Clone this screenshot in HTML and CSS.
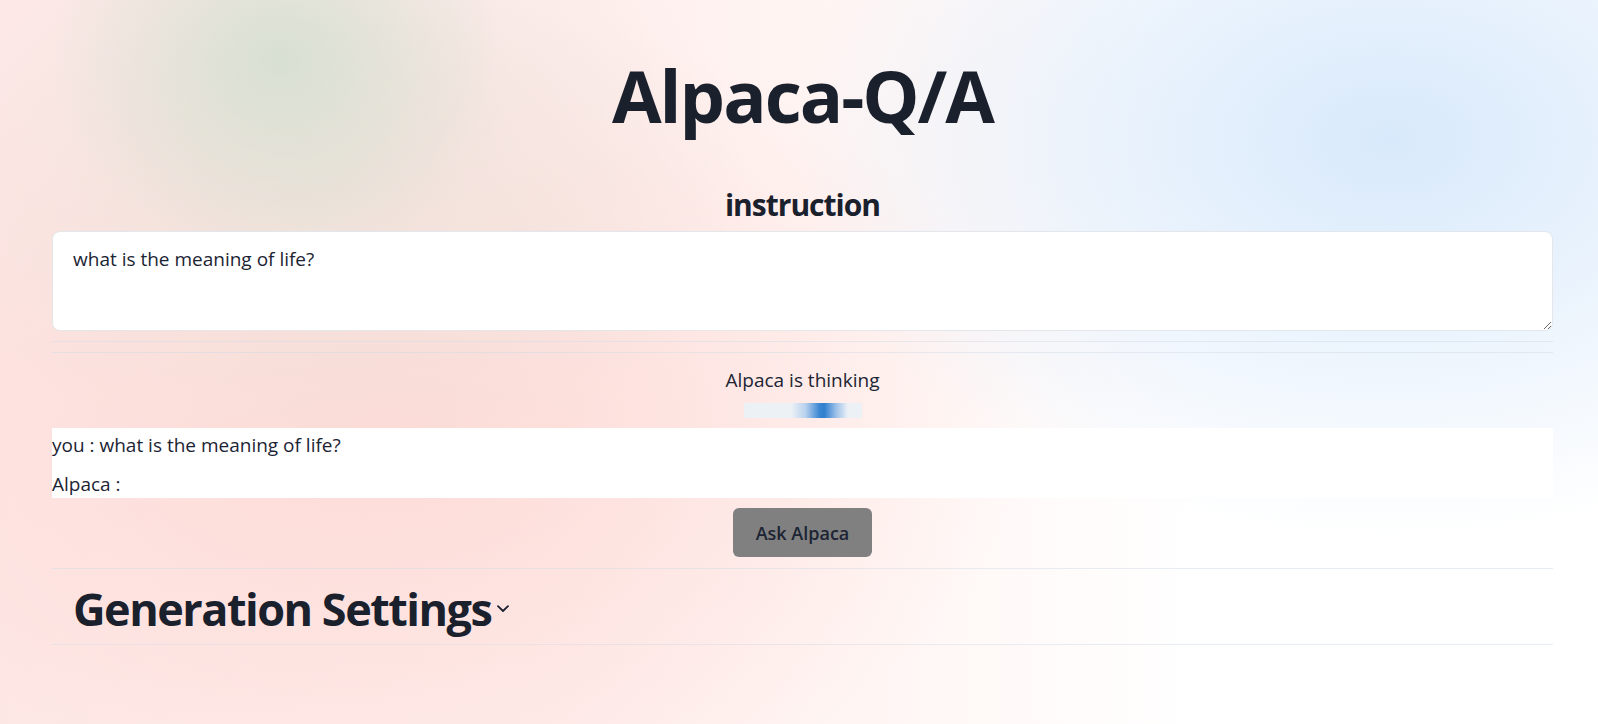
FILE: index.html
```html
<!DOCTYPE html>
<html lang="en">
<head>
<meta charset="utf-8">
<title>Alpaca-Q/A</title>
<link rel="stylesheet" href="styles.css">
</head>
<body>
<main class="page">
  <h1 class="title">Alpaca-Q/A</h1>
  <label class="label" for="prompt">instruction</label>
  <textarea id="prompt" class="prompt">what is the meaning of life?</textarea>
  <hr class="rule rule-first">
  <hr class="rule rule-second">
  <section class="status">
    <p class="status-text">Alpaca is thinking</p>
    <div class="bar"></div>
  </section>
  <section class="chat">
    <p class="msg">you : what is the meaning of life?</p>
    <p class="msg">Alpaca :</p>
  </section>
  <div class="actions">
    <button class="ask" type="button">Ask Alpaca</button>
  </div>
  <hr class="rule rule-top">
  <details class="settings">
    <summary class="settings-summary">
      <h2 class="settings-title">Generation Settings</h2>
      <svg class="chevron" width="12" height="8" viewBox="0 0 12 8" aria-hidden="true"><path d="M1 1.2 L6 6 L11 1.2" fill="none" stroke="#1b2130" stroke-width="1.8" stroke-linecap="round" stroke-linejoin="round"/></svg>
    </summary>
  </details>
  <hr class="rule rule-bottom">
</main>
</body>
</html>
```
FILE: styles.css
```css
html, body {
  margin: 0;
  padding: 0;
  height: 100%;
}

body {
  font-family: "Open Sans", "Noto Sans", sans-serif;
  color: #1c2433;
  background-color: #ffffff;
  background-image:
    radial-gradient(ellipse 230px 200px at 280px 60px, rgba(214, 224, 210, 0.95), rgba(214, 224, 210, 0) 100%),
    radial-gradient(ellipse 420px 300px at 330px 180px, rgba(236, 226, 218, 0.8), rgba(236, 226, 218, 0) 100%),
    radial-gradient(ellipse 600px 400px at 1390px 140px, rgba(216, 233, 251, 1), rgba(216, 233, 251, 0) 100%),
    radial-gradient(ellipse 650px 420px at 380px 420px, rgba(253, 218, 214, 1), rgba(253, 218, 214, 0) 100%),
    linear-gradient(90deg, #fde8e6 0%, #feeeec 35%, #fff6f4 55%, #ffffff 75%);
  overflow: hidden;
}

.page {
  display: flex;
  flex-direction: column;
  margin: 0 45px 0 52px;
}

.title {
  margin: 59px 0 0;
  font-size: 72px;
  line-height: 72px;
  font-weight: 700;
  text-align: center;
  color: #1a202c;
  letter-spacing: -2px;
}

.label {
  display: block;
  margin-top: 56px;
  font-size: 30px;
  line-height: 36px;
  font-weight: 700;
  text-align: center;
  color: #1a202c;
  letter-spacing: -1px;
}

.prompt {
  display: block;
  margin-top: 8px;
  box-sizing: border-box;
  width: 100%;
  height: 100px;
  padding: 13px 20px;
  border: 1px solid #e3e6eb;
  border-radius: 8px;
  background: #ffffff;
  font-family: inherit;
  font-size: 19px;
  line-height: 28px;
  color: #1c2433;
  outline: none;
}

.rule {
  width: 100%;
  height: 0;
  margin: 0;
  border: 0;
  border-top: 1px solid rgba(210, 220, 232, 0.5);
}

.rule-first { margin-top: 10px; }
.rule-second { margin-top: 10px; }

.status {
  display: flex;
  flex-direction: column;
  align-items: center;
  margin-top: 13px;
}

.status-text {
  margin: 0;
  font-size: 19px;
  line-height: 28px;
}

.bar {
  width: 118px;
  height: 15px;
  margin-top: 9px;
  background: linear-gradient(90deg, #ecf1f6 0%, #ecf1f6 40%, #b9d2ee 52%, #3a86d2 64%, #2f7fcf 68%, #9cc0e8 78%, #ecf1f6 88%, #ecf1f6 100%);
}

.chat {
  margin-top: 10px;
  padding-top: 3px;
  background: #ffffff;
  display: flex;
  flex-direction: column;
  gap: 11px;
}

.msg {
  margin: 0;
  font-size: 19px;
  line-height: 28px;
}

.actions {
  display: flex;
  justify-content: center;
  margin-top: 10px;
}

.ask {
  width: 139px;
  height: 49px;
  border: 0;
  border-radius: 6px;
  background: #808080;
  font-family: inherit;
  font-size: 18px;
  font-weight: 600;
  color: #1c2433;
  cursor: pointer;
}

.rule-top { margin-top: 11px; }

.settings {
  margin-top: 16px;
}

.settings-summary {
  display: flex;
  align-items: flex-start;
  list-style: none;
  padding-left: 21px;
  cursor: pointer;
}

.settings-summary::-webkit-details-marker { display: none; }

.settings-title {
  margin: 0;
  font-size: 45px;
  line-height: 48px;
  font-weight: 700;
  color: #1a202c;
  letter-spacing: -1.5px;
}

.chevron {
  margin-top: 20px;
  margin-left: 6px;
}

.rule-bottom { margin-top: 11px; }
```
